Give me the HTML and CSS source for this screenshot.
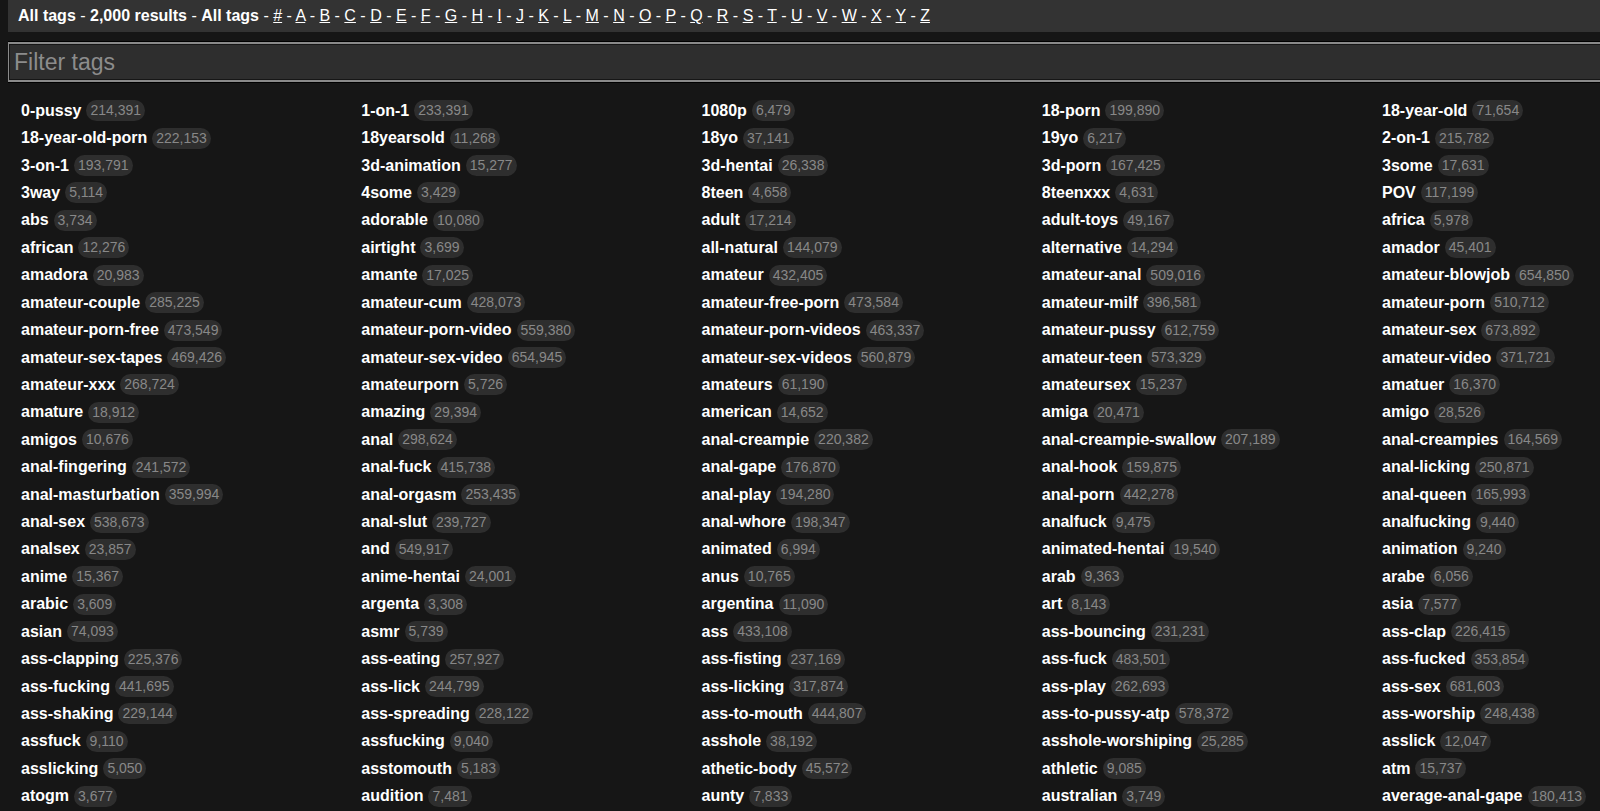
FILE: index.html
```
<!DOCTYPE html>
<html lang="en">
<head>
<meta charset="utf-8">
<title>All tags</title>
<link rel="stylesheet" href="styles.css">
</head>
<body>
<nav class="bar" id="bar"><strong>All tags</strong> - <strong>2,000 results</strong> - <strong>All tags</strong></nav>
<input class="filter" type="text" placeholder="Filter tags" aria-label="Filter tags">
<ul class="tags" id="tags"></ul>
<script src="tags.js"></script>
</body>
</html>
```
FILE: styles.css
```
* {
  box-sizing: border-box;
}

body {
  display: flex;
  flex-direction: column;
  min-height: 100vh;
  margin: 0;
  padding-left: 8px;
  background: #161616;
  color: #fff;
  font-family: "Liberation Sans", Arial, sans-serif;
  font-size: 16px;
}

.bar {
  padding: 0 10px;
  background: #333;
  line-height: 32px;
}

.bar a {
  color: #fff;
}

.filter {
  height: 40px;
  margin: 10px 0 15px;
  padding: 0 5px;
  border: 2px solid #8a8a8a;
  border-width: 2px 0 2px 1px;
  border-radius: 0;
  background: #2e2e2e;
  box-shadow: 0 -1px #000, 0 1px #000, inset 1px 1px #161616, inset 0 -1px #161616;
  color: #fff;
  font-family: inherit;
  font-size: 23px;
}

.filter::placeholder {
  color: #8c8c8c;
}

.tags {
  display: grid;
  flex: 1;
  grid-template-columns: repeat(4, 1fr) 218px;
  align-items: center;
  margin: 0;
  padding: 0 0 1px 13px;
  list-style: none;
  white-space: nowrap;
}

.tag {
  display: flex;
  align-items: center;
  gap: 5px;
}

.tag a {
  color: #fff;
  font-weight: bold;
  line-height: 20px;
  text-decoration: none;
}

.count {
  padding: 0 4px;
  border-radius: 11px;
  background: #2e2e2e;
  color: #888;
  font-size: 14px;
  line-height: 21px;
}
```
FILE: tags.js
```
const tags = `0-pussy 214,391|1-on-1 233,391|1080p 6,479|18-porn 199,890|18-year-old 71,654
18-year-old-porn 222,153|18yearsold 11,268|18yo 37,141|19yo 6,217|2-on-1 215,782
3-on-1 193,791|3d-animation 15,277|3d-hentai 26,338|3d-porn 167,425|3some 17,631
3way 5,114|4some 3,429|8teen 4,658|8teenxxx 4,631|POV 117,199
abs 3,734|adorable 10,080|adult 17,214|adult-toys 49,167|africa 5,978
african 12,276|airtight 3,699|all-natural 144,079|alternative 14,294|amador 45,401
amadora 20,983|amante 17,025|amateur 432,405|amateur-anal 509,016|amateur-blowjob 654,850
amateur-couple 285,225|amateur-cum 428,073|amateur-free-porn 473,584|amateur-milf 396,581|amateur-porn 510,712
amateur-porn-free 473,549|amateur-porn-video 559,380|amateur-porn-videos 463,337|amateur-pussy 612,759|amateur-sex 673,892
amateur-sex-tapes 469,426|amateur-sex-video 654,945|amateur-sex-videos 560,879|amateur-teen 573,329|amateur-video 371,721
amateur-xxx 268,724|amateurporn 5,726|amateurs 61,190|amateursex 15,237|amatuer 16,370
amature 18,912|amazing 29,394|american 14,652|amiga 20,471|amigo 28,526
amigos 10,676|anal 298,624|anal-creampie 220,382|anal-creampie-swallow 207,189|anal-creampies 164,569
anal-fingering 241,572|anal-fuck 415,738|anal-gape 176,870|anal-hook 159,875|anal-licking 250,871
anal-masturbation 359,994|anal-orgasm 253,435|anal-play 194,280|anal-porn 442,278|anal-queen 165,993
anal-sex 538,673|anal-slut 239,727|anal-whore 198,347|analfuck 9,475|analfucking 9,440
analsex 23,857|and 549,917|animated 6,994|animated-hentai 19,540|animation 9,240
anime 15,367|anime-hentai 24,001|anus 10,765|arab 9,363|arabe 6,056
arabic 3,609|argenta 3,308|argentina 11,090|art 8,143|asia 7,577
asian 74,093|asmr 5,739|ass 433,108|ass-bouncing 231,231|ass-clap 226,415
ass-clapping 225,376|ass-eating 257,927|ass-fisting 237,169|ass-fuck 483,501|ass-fucked 353,854
ass-fucking 441,695|ass-lick 244,799|ass-licking 317,874|ass-play 262,693|ass-sex 681,603
ass-shaking 229,144|ass-spreading 228,122|ass-to-mouth 444,807|ass-to-pussy-atp 578,372|ass-worship 248,438
assfuck 9,110|assfucking 9,040|asshole 38,192|asshole-worshiping 25,285|asslick 12,047
asslicking 5,050|asstomouth 5,183|athetic-body 45,572|athletic 9,085|atm 15,737
atogm 3,677|audition 7,481|aunty 7,833|australian 3,749|average-anal-gape 180,413`;

const list = document.getElementById("tags");
for (const entry of tags.split(/[|\n]/)) {
  const [name, total] = entry.split(" ");
  const item = document.createElement("li");
  item.className = "tag";
  const link = document.createElement("a");
  link.href = "#" + name;
  link.textContent = name;
  const count = document.createElement("span");
  count.className = "count";
  count.textContent = total;
  item.append(link, count);
  list.append(item);
}

const bar = document.getElementById("bar");
for (const letter of "#ABCDEFGHIJKLMNOPQRSTUVWXYZ") {
  const link = document.createElement("a");
  link.href = "#" + letter;
  link.textContent = letter;
  bar.append(" - ", link);
}
```
